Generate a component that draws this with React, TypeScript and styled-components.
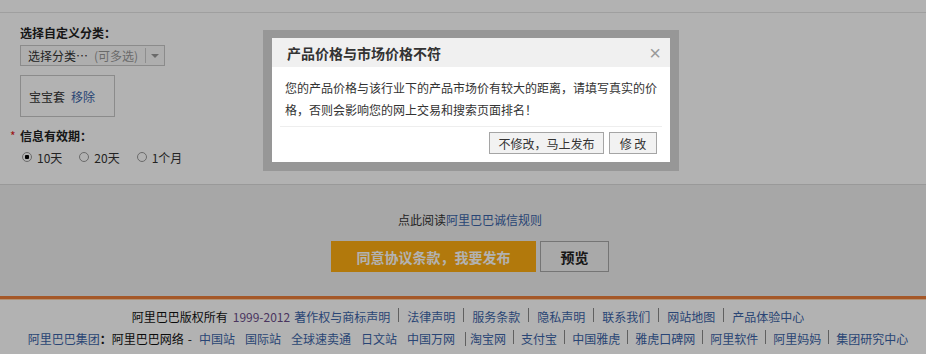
import styled, { createGlobalStyle } from 'styled-components';

const GlobalStyle = createGlobalStyle`
  html, body {
    margin: 0;
    padding: 0;
  }
  body {
    background: #fff;
    font-family: "Noto Sans CJK SC", "Liberation Sans", sans-serif;
    font-size: 12px;
    color: #333;
  }
  a {
    color: #3b64a8;
    text-decoration: none;
  }
`;

const Page = styled.div`
  position: relative;
  width: 926px;
  height: 354px;
  overflow: hidden;
`;

const TopStrip = styled.div`
  height: 12px;
  border-bottom: 1px solid #e4e4e4;
`;

// 表单区域
const FormSection = styled.div`
  box-sizing: border-box;
  height: 172px;
  padding: 11px 10px 0;
  border-bottom: 1px solid #dcdcdc;
  display: flex;
  flex-direction: column;
  align-items: flex-start;
`;

const FieldLabel = styled.div<{ $top?: number }>`
  display: flex;
  line-height: 18px;
  font-weight: bold;
  color: #222;
  margin-top: ${(p) => p.$top ?? 0}px;
`;

const Gutter = styled.span`
  width: 10px;
  color: #e02020;
  font-weight: normal;
`;

const FieldBody = styled.div<{ $top: number }>`
  margin-top: ${(p) => p.$top}px;
  margin-left: 10px;
`;

const FakeSelect = styled.div`
  box-sizing: border-box;
  width: 145px;
  height: 21px;
  border: 1px solid #c8c8c8;
  background: #fafafa;
  display: flex;
  align-items: center;
  padding-left: 7px;
  color: #333;
  white-space: nowrap;
`;

const Hint = styled.span`
  color: #999;
  margin-left: 6px;
`;

const SelectArrow = styled.span`
  margin-left: auto;
  width: 18px;
  height: 15px;
  border-left: 1px solid #ccc;
  display: flex;
  align-items: center;
  justify-content: center;

  &::after {
    content: '';
    border-left: 4px solid transparent;
    border-right: 4px solid transparent;
    border-top: 4px solid #999;
  }
`;

const TagBox = styled.div`
  box-sizing: border-box;
  width: 95px;
  height: 42px;
  border: 1px solid #c8c8c8;
  background: #fff;
  display: flex;
  align-items: center;
  gap: 6px;
  padding-left: 8px;
`;

const RadioRow = styled.div`
  display: flex;
  align-items: center;
  height: 18px;
  padding-left: 2px;
`;

const RadioOption = styled.label`
  display: flex;
  align-items: center;
  gap: 5px;
  margin-right: 17px;
  color: #333;
`;

const RadioDot = styled.span<{ $checked?: boolean }>`
  box-sizing: border-box;
  width: 10px;
  height: 10px;
  border-radius: 50%;
  border: 1px solid #999;
  background: ${(p) =>
    p.$checked ? 'radial-gradient(circle, #000 0 2px, #fff 2.5px)' : '#fff'};
`;

// 协议与发布
const AgreeSection = styled.div`
  box-sizing: border-box;
  height: 111px;
  background: #f0f0f0;
  padding: 26px 0 0 14px;
  text-align: center;
`;

const ReadLine = styled.div`
  line-height: 18px;
  color: #333;
`;

const ButtonRow = styled.div`
  margin-top: 12px;
  display: flex;
  justify-content: center;
  gap: 4px;
`;

const PublishButton = styled.button`
  width: 205px;
  height: 31px;
  border: none;
  background: #ffae12;
  color: #fff;
  font-family: inherit;
  font-size: 14px;
  font-weight: bold;
`;

const PreviewButton = styled.button`
  width: 69px;
  height: 31px;
  border: 1px solid #a8a8a8;
  background: #f2f2f2;
  color: #222;
  font-family: inherit;
  font-size: 14px;
  font-weight: bold;
`;

// 页脚
const Footer = styled.div`
  border-top: 3px solid #ec7f3a;
  box-shadow: inset 0 1px 0 #ffd2aa;
  padding-top: 7px;
`;

const FooterRow = styled.div`
  display: flex;
  justify-content: center;
  align-items: center;
  line-height: 22px;
  padding-left: 10px;
  color: #111;
  white-space: nowrap;
`;

const Year = styled.span`
  color: #6a4c89;
  margin: 0 4px 0 5px;
`;

const Dash = styled.span`
  margin: 0 7px 0 4px;
`;

const Sep = styled.span<{ $left?: number; $right?: number }>`
  display: inline-block;
  width: 1px;
  height: 14px;
  background: #8a8a8a;
  margin: 0 ${(p) => p.$right ?? 8}px 0 ${(p) => p.$left ?? 8}px;
`;

const Spaced = styled.a`
  margin-right: 10px;
`;

// 弹窗
const Mask = styled.div`
  position: absolute;
  inset: 0;
  background: rgba(0, 0, 0, 0.3);
`;

const DialogFrame = styled.div`
  position: absolute;
  left: 263px;
  top: 30px;
  padding: 8px 9px 9px;
  background: rgba(0, 0, 0, 0.15);
`;

const DialogPanel = styled.div`
  width: 398px;
  background: #fff;
`;

const DialogHeader = styled.div`
  height: 29px;
  background: #f0f0f0;
  display: flex;
  align-items: center;
  justify-content: space-between;
  padding: 0 9px 0 15px;
`;

const DialogTitle = styled.span`
  font-size: 14px;
  font-weight: bold;
  color: #333;
`;

const CloseMark = styled.span`
  font-size: 20px;
  line-height: 20px;
  color: #9a9a9a;
  font-family: "Liberation Sans", sans-serif;
`;

const DialogBody = styled.p`
  margin: 0;
  padding: 10px 11px 0 13px;
  line-height: 22px;
  color: #333;
`;

const DialogDivider = styled.div`
  margin: 5px 8px 0;
  border-top: 1px solid #eee;
`;

const DialogActions = styled.div`
  display: flex;
  justify-content: flex-end;
  gap: 5px;
  padding: 5px 13px 8px;
`;

const DialogButton = styled.button<{ $width: number }>`
  width: ${(p) => p.$width}px;
  height: 22px;
  padding: 0;
  border: 1px solid #a5a5a5;
  background: #f2f2f2;
  color: #333;
  font-family: inherit;
  font-size: 12px;
`;

const groupSites = ['中国站', '国际站', '全球速卖通', '日文站'];
const otherSites = ['支付宝', '中国雅虎', '雅虎口碑网', '阿里软件', '阿里妈妈', '集团研究中心'];
const legalLinks = ['法律声明', '服务条款', '隐私声明', '联系我们', '网站地图', '产品体验中心'];

export default function App() {
  return (
    <Page>
      <GlobalStyle />
      <TopStrip />

      <FormSection>
        <FieldLabel>
          <Gutter />
          选择自定义分类：
        </FieldLabel>
        <FieldBody $top={3}>
          <FakeSelect>
            选择分类…<Hint>(可多选)</Hint>
            <SelectArrow />
          </FakeSelect>
        </FieldBody>
        <FieldBody $top={9}>
          <TagBox>
            宝宝套<a href="#">移除</a>
          </TagBox>
        </FieldBody>
        <FieldLabel $top={10}>
          <Gutter>*</Gutter>
          信息有效期：
        </FieldLabel>
        <FieldBody $top={3}>
          <RadioRow>
            <RadioOption>
              <RadioDot $checked />
              10天
            </RadioOption>
            <RadioOption>
              <RadioDot />
              20天
            </RadioOption>
            <RadioOption>
              <RadioDot />
              1个月
            </RadioOption>
          </RadioRow>
        </FieldBody>
      </FormSection>

      <AgreeSection>
        <ReadLine>
          点此阅读<a href="#">阿里巴巴诚信规则</a>
        </ReadLine>
        <ButtonRow>
          <PublishButton>同意协议条款，我要发布</PublishButton>
          <PreviewButton>预览</PreviewButton>
        </ButtonRow>
      </AgreeSection>

      <Footer>
        <FooterRow>
          阿里巴巴版权所有<Year>1999-2012</Year>
          <a href="#">著作权与商标声明</a>
          {legalLinks.map((l) => (
            <span key={l}>
              <Sep />
              <a href="#">{l}</a>
            </span>
          ))}
        </FooterRow>
        <FooterRow>
          <a href="#">阿里巴巴集团</a>
          <b>：</b>阿里巴巴网络<Dash>-</Dash>
          {groupSites.map((s) => (
            <Spaced key={s} href="#">
              {s}
            </Spaced>
          ))}
          <a href="#">中国万网</a>
          <Sep $left={10} $right={4} />
          <a href="#">淘宝网</a>
          {otherSites.map((s) => (
            <span key={s}>
              <Sep $left={7} $right={7} />
              <a href="#">{s}</a>
            </span>
          ))}
        </FooterRow>
      </Footer>

      <Mask />
      <DialogFrame>
        <DialogPanel>
          <DialogHeader>
            <DialogTitle>产品价格与市场价格不符</DialogTitle>
            <CloseMark>×</CloseMark>
          </DialogHeader>
          <DialogBody>
            您的产品价格与该行业下的产品市场价有较大的距离，请填写真实的价格，否则会影响您的网上交易和搜索页面排名！
          </DialogBody>
          <DialogDivider />
          <DialogActions>
            <DialogButton $width={115}>不修改，马上发布</DialogButton>
            <DialogButton $width={48}>修 改</DialogButton>
          </DialogActions>
        </DialogPanel>
      </DialogFrame>
    </Page>
  );
}
